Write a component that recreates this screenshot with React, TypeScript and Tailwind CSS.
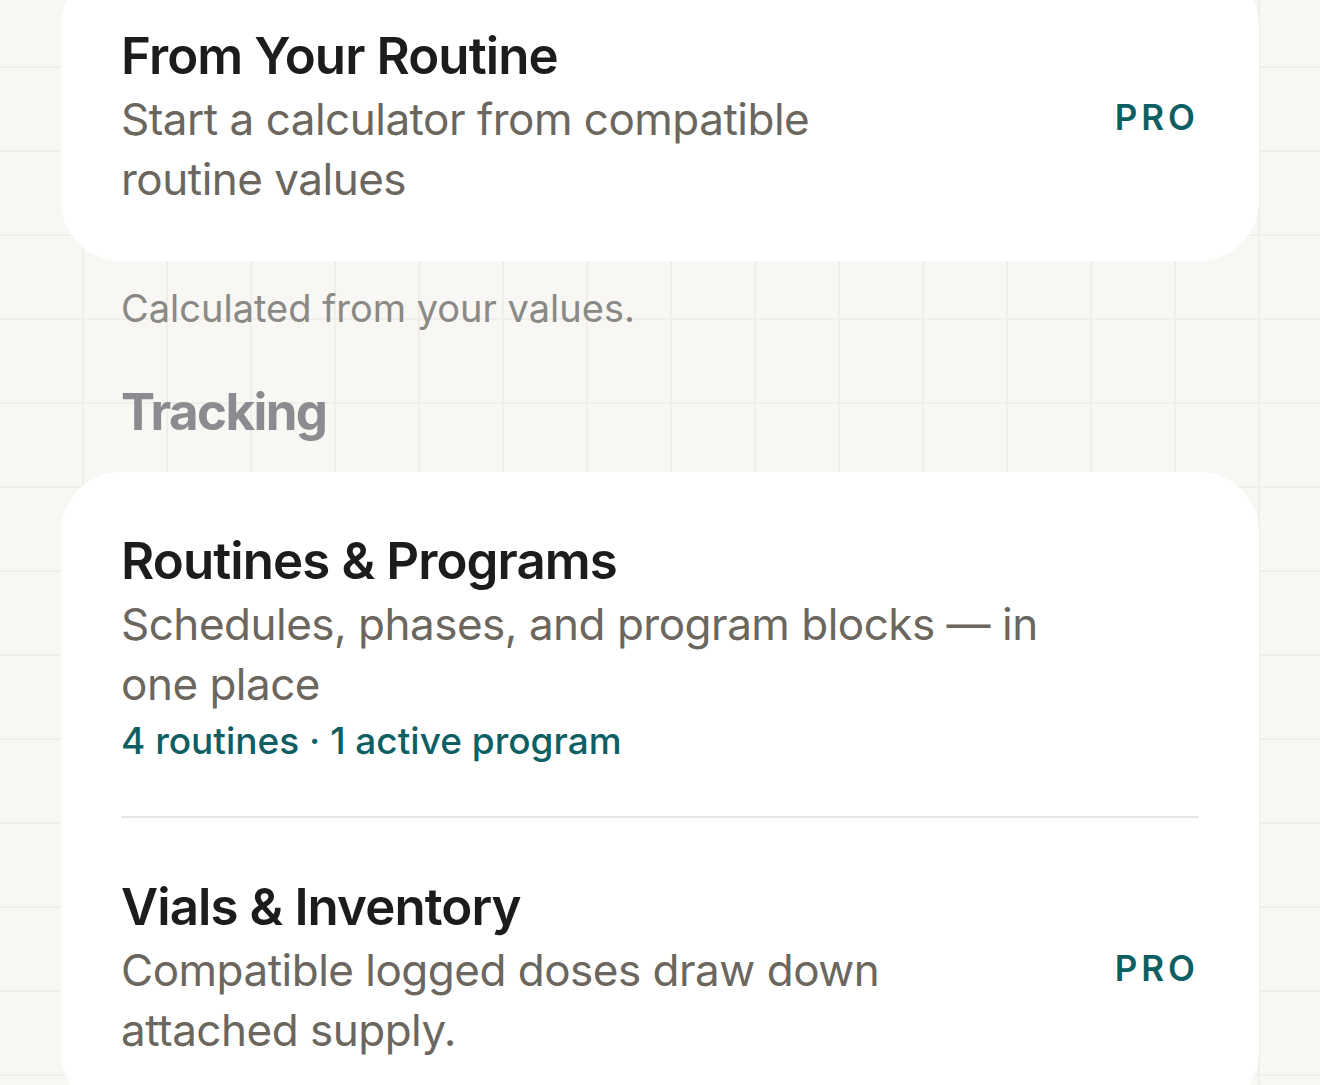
import React from "react";

type Row = {
  title: string;
  subtitle: string;
  meta?: string;
  pro?: boolean;
};

const calcRows: Row[] = [
  {
    title: "From Your Routine",
    subtitle: "Start a calculator from compatible routine values",
    pro: true,
  },
];

const trackingRows: Row[] = [
  {
    title: "Routines & Programs",
    subtitle: "Schedules, phases, and program blocks — in one place",
    meta: "4 routines · 1 active program",
  },
  {
    title: "Vials & Inventory",
    subtitle: "Compatible logged doses draw down attached supply.",
    pro: true,
  },
];

const ProBadge = () => (
  <span className="shrink-0 text-[35px] leading-none font-semibold tracking-[4px] text-[#0e5f63]">
    PRO
  </span>
);

const ListRow = ({ row, last }: { row: Row; last: boolean }) => (
  <div className="px-[60px]">
    <div className="flex items-center justify-between pt-[58px] pb-[52px]">
      <div className={row.pro ? "max-w-[800px]" : "max-w-[960px]"}>
        <div className="text-[51px] leading-[61px] font-semibold tracking-[-0.9px] text-[#1d1c1a]">{row.title}</div>
        <div className="mt-[3px] text-[44px] leading-[60px] tracking-[-0.5px] text-[#6b665e]">{row.subtitle}</div>
        {row.meta && (
          <div className="mt-[3px] text-[37px] leading-[47px] font-medium text-[#0e5f63]">{row.meta}</div>
        )}
      </div>
      {row.pro && <ProBadge />}
    </div>
    {!last && <div className="h-[2px] bg-[#e6e6e3]" />}
  </div>
);

const Card = ({ rows, className = "" }: { rows: Row[]; className?: string }) => (
  <div className={`rounded-[60px] bg-white ${className}`}>
    {rows.map((row, idx) => (
      <ListRow key={row.title} row={row} last={idx === rows.length - 1} />
    ))}
  </div>
);

export default function App() {
  return (
    <div className="h-[1085px] w-[1320px] overflow-hidden bg-[#f8f7f3] bg-[linear-gradient(to_right,#efeee9_2px,transparent_2px),linear-gradient(to_bottom,#efeee9_2px,transparent_2px)] bg-[size:84px_84px] bg-[position:82px_66px] font-['Inter',sans-serif] antialiased">
      <div className="px-[61px]">
        <Card rows={calcRows} className="-mt-[33px]" />

        <p className="mt-[24px] px-[60px] text-[38px] leading-[47px] text-[#8a8985]">
          Calculated from your values.
        </p>

        <h2 className="mt-[49px] px-[60px] text-[51px] leading-[61px] font-bold tracking-[-1.6px] text-[#8c8c90]">
          Tracking
        </h2>

        <Card rows={trackingRows} className="mt-[30px]" />
      </div>
    </div>
  );
}
